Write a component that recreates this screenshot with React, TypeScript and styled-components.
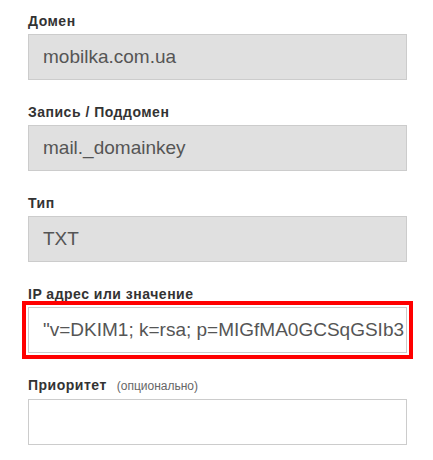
import React from "react";
import styled, { createGlobalStyle } from "styled-components";

const GlobalStyle = createGlobalStyle`
  html, body {
    margin: 0;
    padding: 0;
    background: #ffffff;
    font-family: "Liberation Sans", Arial, sans-serif;
  }
`;

const Form = styled.form`
  display: flex;
  flex-direction: column;
  gap: 23px;
  padding: 12px 0 0 28px;
  width: 379px;
`;

const Field = styled.div`
  display: flex;
  flex-direction: column;
  gap: 4px;
`;

const Label = styled.label`
  display: flex;
  align-items: baseline;
  gap: 10px;
  font-size: 14px;
  line-height: 18px;
  font-weight: bold;
  letter-spacing: 0.5px;
  color: #333333;
`;

const Hint = styled.span`
  font-size: 12px;
  font-weight: normal;
  letter-spacing: 0;
  color: #666666;
`;

const Input = styled.input<{ $disabled?: boolean; $highlight?: boolean }>`
  box-sizing: border-box;
  width: 379px;
  height: 46px;
  margin: 0;
  padding: 0 1px 0 14px;
  border: 1px solid #cccccc;
  border-radius: 0;
  background: ${(p) => (p.$disabled ? "#e0e0e0" : "#ffffff")};
  color: #555555;
  font-family: "Liberation Sans", Arial, sans-serif;
  font-size: 19px;
  outline: ${(p) => (p.$highlight ? "4px solid #ff0000" : "none")};
  outline-offset: 2px;
`;

const fields = [
  { label: "Домен", value: "mobilka.com.ua", disabled: true },
  { label: "Запись / Поддомен", value: "mail._domainkey", disabled: true },
  { label: "Тип", value: "TXT", disabled: true },
  {
    label: "IP адрес или значение",
    value: '"v=DKIM1; k=rsa; p=MIGfMA0GCSqGSIb3',
    highlight: true,
  },
  { label: "Приоритет", hint: "(опционально)", value: "" },
];

export default function App() {
  return (
    <>
      <GlobalStyle />
      <Form onSubmit={(e) => e.preventDefault()}>
        {fields.map((f) => (
          <Field key={f.label}>
            <Label>
              {f.label}
              {f.hint && <Hint>{f.hint}</Hint>}
            </Label>
            <Input
              readOnly
              value={f.value}
              $disabled={f.disabled}
              $highlight={f.highlight}
            />
          </Field>
        ))}
      </Form>
    </>
  );
}
